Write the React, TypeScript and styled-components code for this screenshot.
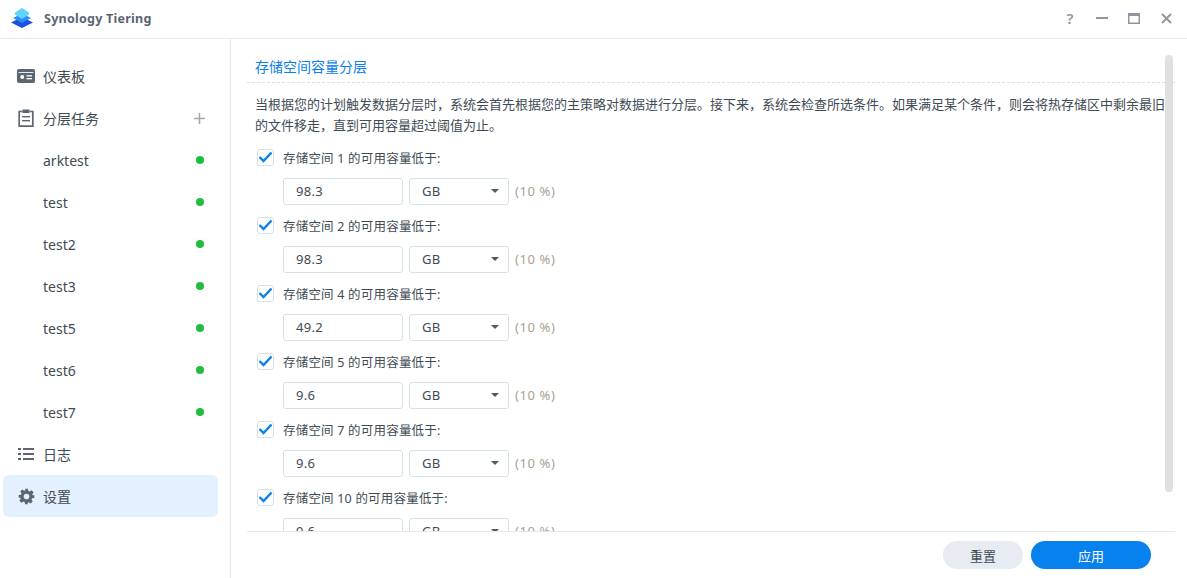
import React from "react";
import styled, { createGlobalStyle } from "styled-components";

const FONT = `"Noto Sans", "Noto Sans CJK SC", sans-serif`;

const Global = createGlobalStyle`
  html, body { margin: 0; padding: 0; background: #fff; }
  body { font-family: ${FONT}; overflow: hidden; }
  * { box-sizing: border-box; }
`;

const Win = styled.div`
  width: 1187px; height: 578px; display: flex; flex-direction: column; background: #fff; color: #414b55;
`;
const Header = styled.header`
  height: 39px; flex: none; display: flex; align-items: center; border-bottom: 1px solid #e3e9ef; padding: 0 0 2px 10px;
`;
const AppTitle = styled.div`
  margin-left: 10px; font-size: 12.5px; font-weight: 700; color: #5a6472; letter-spacing: .25px;
`;
const Tools = styled.div`
  margin-left: auto; display: flex; align-items: center; gap: 14px; padding-right: 12px; color: #9096a0;
`;
const ToolBtn = styled.span`
  width: 18px; height: 18px; display: flex; align-items: center; justify-content: center; font-size: 15px; font-weight: 600;
`;
const Body = styled.div`
  flex: 1; min-height: 0; display: flex;
`;
const Side = styled.nav`
  width: 231px; flex: none; border-right: 1px solid #e3e9ef; padding: 16px 12px 0 3px;
`;
const Item = styled.div<{ $active?: boolean; $sub?: boolean }>`
  height: 42px; display: flex; align-items: center; padding: 0 14px 0 ${p => (p.$sub ? "40px" : "14px")};
  border-radius: 6px; font-size: 14px; color: #414b55; background: ${p => (p.$active ? "#e3f0fd" : "transparent")};
`;
const ItemIcon = styled.span`
  width: 18px; height: 18px; margin-right: 8px; display: flex; align-items: center; justify-content: center; color: #5c6670;
`;
const Dot = styled.span`
  margin-left: auto; width: 8px; height: 8px; border-radius: 50%; background: #1fbe3c;
`;
const Plus = styled.span`
  margin-left: auto; color: #a4a9b0; margin-right: -1px; display: flex;
`;
const Main = styled.main`
  flex: 1; min-width: 0; display: flex; flex-direction: column; padding: 0 12px 0 16px; position: relative;
`;
const Scroll = styled.div`
  flex: 1; min-height: 0; overflow: hidden; padding-top: 16px;
`;
const Title = styled.h2`
  margin: 0; height: 28px; padding: 0 8px; font-size: 14px; font-weight: 400; line-height: 24px; color: #0a80ee;
  border-bottom: 1px dashed #d6e0ea;
`;
const Desc = styled.p`
  margin: 11px 0 0; padding: 0 8px; font-size: 13px; line-height: 21px; color: #414b55; white-space: nowrap; overflow: hidden; width: 920px;
`;
const Group = styled.div`
  margin-top: 4px; padding: 0 10px;
`;
const CheckRow = styled.div`
  height: 34px; display: flex; align-items: center; font-size: 12.5px; color: #414b55; letter-spacing: .2px;
`;
const Box = styled.span`
  width: 17px; height: 17px; border: 1px solid #d5e0ea; border-radius: 3px; margin-right: 9px; display: flex; align-items: center; justify-content: center; background: #fff;
`;
const FieldRow = styled.div`
  height: 34px; display: flex; align-items: center; gap: 6px; padding-left: 26px;
`;
const Input = styled.div`
  width: 120px; height: 27px; border: 1px solid #d5e0ea; border-radius: 3px; padding: 0 12px; display: flex; align-items: center; font-size: 13px; color: #414b55; letter-spacing: .3px;
`;
const Select = styled(Input)`
  width: 100px; justify-content: space-between; padding-right: 9px;
`;
const Caret = styled.span`
  width: 0; height: 0; border-left: 4.5px solid transparent; border-right: 4.5px solid transparent; border-top: 4.5px solid #4f5965;
`;
const Pct = styled.span`
  font-size: 13px; color: #a89f94; letter-spacing: .6px;
`;
const Footer = styled.footer`
  height: 47px; flex: none; border-top: 1px solid #e5e8ec; display: flex; justify-content: flex-end; align-items: flex-start; gap: 8px; padding: 9px 24px 0 0;
`;
const Btn = styled.button<{ $primary?: boolean }>`
  height: 28px; width: ${p => (p.$primary ? "120px" : "80px")}; border: 0; border-radius: 14px; font-family: ${FONT}; font-size: 13px;
  background: ${p => (p.$primary ? "#0781ee" : "#e7ecf3")}; color: ${p => (p.$primary ? "#fff" : "#414b55")};
`;
const Thumb = styled.div`
  position: absolute; right: 14px; top: 16px; width: 8px; height: 437px; border-radius: 4px; background: #e0e0e0;
`;

const Logo = () => (
  <svg width="24" height="22" viewBox="0 0 24 22">
    <path d="M12 10 23 15.5 12 21 1 15.5Z" fill="#1a4fe0" />
    <path d="M12 6.5 21 11 12 16 3 11Z" fill="#2a8cf5" />
    <path d="M12 1 19 5.5 19 7.5 12 12 5 7.5 5 5.5Z" fill="#5fd3fb" />
  </svg>
);
const Dash = () => (
  <svg width="18" height="16" viewBox="0 0 18 16">
    <rect y="1" width="18" height="14" rx="2" fill="currentColor" />
    <rect x="1.5" y="4" width="15" height="1" fill="#fff" opacity=".85" />
    <circle cx="5.2" cy="9" r="2" fill="#fff" />
    <rect x="9.5" y="7.2" width="5.5" height="1.3" fill="#fff" />
    <rect x="9.5" y="10" width="5.5" height="1.3" fill="#fff" />
  </svg>
);
const Clip = () => (
  <svg width="16" height="18" viewBox="0 0 16 18" fill="none">
    <path d="M4.5 2.5H1.2v14.6h13.6V2.5h-3.3" stroke="currentColor" strokeWidth="1.7" />
    <rect x="4.5" y="0.5" width="7" height="3.5" fill="currentColor" />
    <rect x="4" y="7" width="8" height="1.4" fill="currentColor" />
    <rect x="4" y="11" width="8" height="1.4" fill="currentColor" />
  </svg>
);
const List = () => (
  <svg width="16" height="12" viewBox="0 0 16 12" fill="currentColor">
    <rect y="0" width="3" height="2" /><rect x="5" y="0" width="11" height="2" />
    <rect y="5" width="3" height="2" /><rect x="5" y="5" width="11" height="2" />
    <rect y="10" width="3" height="2" /><rect x="5" y="10" width="11" height="2" />
  </svg>
);
const Gear = () => (
  <svg width="17" height="17" viewBox="0 0 24 24" fill="currentColor">
    <path fillRule="evenodd" d="M10 1h4l.6 3.2 1.9.8 2.7-1.8 2.8 2.8-1.8 2.7.8 1.9L23 10v4l-3.2.6-.8 1.9 1.8 2.7-2.8 2.8-2.7-1.8-1.9.8L14 23h-4l-.6-3.2-1.9-.8-2.7 1.8-2.8-2.8 1.8-2.7-.8-1.9L1 14v-4l3.2-.6.8-1.9-1.8-2.7 2.8-2.8 2.7 1.8 1.9-.8ZM12 8a4 4 0 1 0 0 8 4 4 0 0 0 0-8Z" />
  </svg>
);
const Check = () => (
  <svg width="15" height="12" viewBox="0 0 15 12" fill="none">
    <path d="M1.5 6 5.5 10 13.5 1.5" stroke="#0a80ee" strokeWidth="2.4" />
  </svg>
);

const tasks = ["arktest", "test", "test2", "test3", "test5", "test6", "test7"];
const volumes = [
  ["1", "98.3"], ["2", "98.3"], ["4", "49.2"], ["5", "9.6"], ["7", "9.6"], ["10", "9.6"],
];

export default function App() {
  return (
    <Win>
      <Global />
      <Header>
        <Logo />
        <AppTitle>Synology Tiering</AppTitle>
        <Tools>
          <ToolBtn>?</ToolBtn>
          <ToolBtn>
            <svg width="12" height="12" viewBox="0 0 12 12"><rect y="5" width="12" height="2" fill="currentColor" /></svg>
          </ToolBtn>
          <ToolBtn>
            <svg width="12" height="11" viewBox="0 0 12 11" fill="none"><rect x=".75" y=".75" width="10.5" height="9.5" stroke="currentColor" strokeWidth="1.5" /><rect y="0" width="12" height="3" fill="currentColor" /></svg>
          </ToolBtn>
          <ToolBtn>
            <svg width="11" height="11" viewBox="0 0 11 11" fill="none"><path d="M1 1 10 10M10 1 1 10" stroke="currentColor" strokeWidth="2" /></svg>
          </ToolBtn>
        </Tools>
      </Header>
      <Body>
        <Side>
          <Item><ItemIcon><Dash /></ItemIcon>仪表板</Item>
          <Item>
            <ItemIcon><Clip /></ItemIcon>分层任务
            <Plus>
              <svg width="11" height="11" viewBox="0 0 11 11"><path d="M4.7 0h1.6v4.7H11v1.6H6.3V11H4.7V6.3H0V4.7h4.7Z" fill="currentColor" /></svg>
            </Plus>
          </Item>
          {tasks.map(t => (
            <Item $sub key={t}>{t}<Dot /></Item>
          ))}
          <Item><ItemIcon><List /></ItemIcon>日志</Item>
          <Item $active><ItemIcon><Gear /></ItemIcon>设置</Item>
        </Side>
        <Main>
          <Scroll>
            <Title>存储空间容量分层</Title>
            <Desc>
              当根据您的计划触发数据分层时，系统会首先根据您的主策略对数据进行分层。接下来，系统会检查所选条件。如果满足某个条件，则会将热存储区中剩余最旧
              <br />
              的文件移走，直到可用容量超过阈值为止。
            </Desc>
            <Group>
              {volumes.map(([n, v]) => (
                <React.Fragment key={n}>
                  <CheckRow>
                    <Box><Check /></Box>
                    存储空间 {n} 的可用容量低于:
                  </CheckRow>
                  <FieldRow>
                    <Input>{v}</Input>
                    <Select>GB<Caret /></Select>
                    <Pct>(10 %)</Pct>
                  </FieldRow>
                </React.Fragment>
              ))}
            </Group>
          </Scroll>
          <Thumb />
          <Footer>
            <Btn>重置</Btn>
            <Btn $primary>应用</Btn>
          </Footer>
        </Main>
      </Body>
    </Win>
  );
}
